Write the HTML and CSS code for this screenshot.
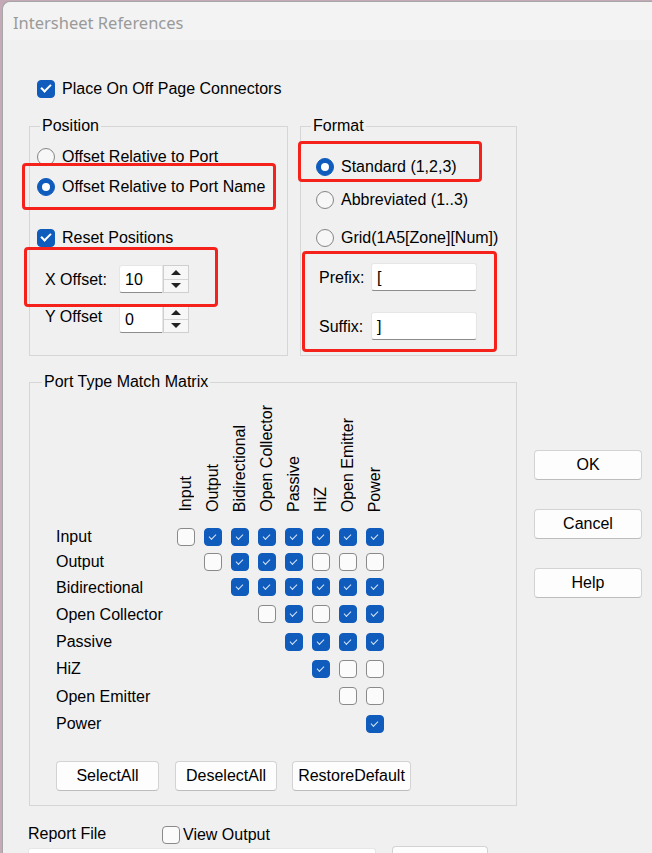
FILE: index.html
```html
<!DOCTYPE html>
<html lang="en">
<head>
    <meta charset="UTF-8">
    <meta name="viewport" content="width=device-width, initial-scale=1.0">
    <title>Intersheet References</title>
    <link rel="stylesheet" href="styles.css">
</head>
<body>
    <div class="window">
        <div class="titlebar">Intersheet References</div>
        <div class="content">
            <div class="main">
                <div class="opt top-check"><span class="cb on"></span>Place On Off Page Connectors</div>

                <div class="groups">
                    <fieldset class="group position">
                        <legend>Position</legend>
                        <div class="opt pos-1"><span class="radio"></span>Offset Relative to Port</div>
                        <div class="opt pos-2"><span class="radio on"></span>Offset Relative to Port Name</div>
                        <div class="opt pos-reset"><span class="cb on"></span>Reset Positions</div>
                        <div class="field pos-x">
                            <span class="field-label">X Offset:</span>
                            <span class="spin-input">10</span>
                            <span class="spin"><span class="up"></span><span class="down"></span></span>
                        </div>
                        <div class="field pos-y">
                            <span class="field-label">Y Offset</span>
                            <span class="spin-input">0</span>
                            <span class="spin"><span class="up"></span><span class="down"></span></span>
                        </div>
                    </fieldset>

                    <fieldset class="group format">
                        <legend>Format</legend>
                        <div class="opt fmt-1"><span class="radio on"></span>Standard (1,2,3)</div>
                        <div class="opt fmt-2"><span class="radio"></span>Abbreviated (1..3)</div>
                        <div class="opt fmt-3"><span class="radio"></span>Grid(1A5[Zone][Num])</div>
                        <div class="field fmt-prefix">
                            <span class="field-label">Prefix:</span>
                            <span class="text-input">[</span>
                        </div>
                        <div class="field fmt-suffix">
                            <span class="field-label">Suffix:</span>
                            <span class="text-input">]</span>
                        </div>
                    </fieldset>
                </div>

                <fieldset class="group matrix-group">
                    <legend>Port Type Match Matrix</legend>
                    <div class="matrix" id="matrix">
                        <!-- filled by script -->
                    </div>
                    <div class="matrix-buttons">
                        <button class="btn select-all">SelectAll</button>
                        <button class="btn deselect-all">DeselectAll</button>
                        <button class="btn restore">RestoreDefault</button>
                    </div>
                </fieldset>

                <div class="report-row">
                    <span class="report-label">Report File</span>
                    <div class="opt view-output"><span class="cb"></span>View Output</div>
                </div>
                <div class="report-file">
                    <span class="text-input report-input"></span>
                    <button class="btn browse"></button>
                </div>
            </div>

            <div class="side">
                <button class="btn">OK</button>
                <button class="btn">Cancel</button>
                <button class="btn">Help</button>
            </div>
        </div>
    </div>

    <!-- red annotation boxes -->
    <div class="mark mark-1"></div>
    <div class="mark mark-2"></div>
    <div class="mark mark-3"></div>
    <div class="mark mark-4"></div>

    <script>
        const ports = ["Input", "Output", "Bidirectional", "Open Collector", "Passive", "HiZ", "Open Emitter", "Power"];

        // each row starts at its own column (upper triangle)
        const matches = [
            [0, 1, 1, 1, 1, 1, 1, 1],
            [0, 1, 1, 1, 0, 0, 0],
            [1, 1, 1, 1, 1, 1],
            [0, 1, 0, 1, 1],
            [1, 1, 1, 1],
            [1, 0, 0],
            [0, 0],
            [1]
        ];

        function buildMatrix() {
            const matrix = document.getElementById("matrix");
            let html = '<div class="corner"></div>';

            ports.forEach(port => {
                html += `<div class="col-head"><span>${port}</span></div>`;
            });

            ports.forEach((port, i) => {
                html += `<div class="row-head">${port}</div>`;
                for (let j = 0; j < ports.length; j++) {
                    if (j < i) {
                        html += '<div class="cell"></div>';
                    } else {
                        const on = matches[i][j - i] ? " on" : "";
                        html += `<div class="cell"><span class="cb${on}"></span></div>`;
                    }
                }
            });

            matrix.innerHTML = html;
        }

        buildMatrix();
    </script>
</body>
</html>
```

FILE: styles.css
```css
/* Page */
body {
    margin: 0;
    position: relative;
    overflow: hidden;
    background-color: #c4aab6;
    font-family: 'Liberation Sans', Arial, sans-serif;
    font-size: 16px;
    line-height: 20px;
    color: #000;
}

.window {
    margin: 1px 0 0 2px;
    height: 851px;
    overflow: hidden;
    background-color: #f0f0f0;
    border-top: 1px solid #a6a6a6;
    border-left: 1px solid #a6a6a6;
    border-top-left-radius: 8px;
}

.titlebar {
    height: 38px;
    box-sizing: border-box;
    padding: 3px 0 0 10px;
    display: flex;
    align-items: center;
    background-color: #f3f3f3;
    border-top-left-radius: 8px;
    font-family: 'Noto Sans', sans-serif;
    font-size: 16.5px;
    color: #9a9a9a;
}

.content {
    display: flex;
    padding-left: 26px;
}

.main {
    width: 488px;
    flex-shrink: 0;
}

.side {
    width: 108px;
    margin-left: 17px;
    padding-top: 410px;
    display: flex;
    flex-direction: column;
    gap: 29px;
}

/* Controls */
.opt {
    display: flex;
    align-items: center;
    gap: 7px;
    height: 24px;
    box-sizing: border-box;
    padding-top: 1px;
    white-space: nowrap;
}

.cb {
    width: 18px;
    height: 18px;
    box-sizing: border-box;
    flex-shrink: 0;
    border: 1px solid #8a8a8a;
    border-radius: 4px;
    background-color: #fbfbfb;
    display: flex;
    align-items: center;
    justify-content: center;
}

.cb.on {
    border-color: #0f5cbd;
    background-color: #0f5cbd;
}

.cb.on::after {
    content: "";
    width: 8px;
    height: 4px;
    margin-top: -3px;
    border-left: 2px solid #fff;
    border-bottom: 2px solid #fff;
    transform: rotate(-45deg);
}

.radio {
    width: 18px;
    height: 18px;
    box-sizing: border-box;
    flex-shrink: 0;
    border: 1px solid #858585;
    border-radius: 50%;
    background-color: #f7f7f7;
    display: flex;
    align-items: center;
    justify-content: center;
}

.radio.on {
    border-color: #0f5cbd;
    background-color: #0f5cbd;
}

.radio.on::after {
    content: "";
    width: 8px;
    height: 8px;
    border-radius: 50%;
    background-color: #fff;
}

.field {
    display: flex;
    align-items: center;
    height: 28px;
    margin-left: 8px;
}

.field-label {
    flex-shrink: 0;
    padding-top: 1px;
}

.text-input,
.spin-input {
    height: 28px;
    box-sizing: border-box;
    padding: 4px 5px 0;
    background-color: #fff;
    border: 1px solid #e6e6e6;
    border-bottom: 1px solid #8c8c8c;
    border-radius: 3px;
}

.spin-input {
    width: 44px;
    border-radius: 3px 0 0 3px;
}

.spin {
    width: 26px;
    height: 28px;
    box-sizing: border-box;
    border: 1px solid #cfcfcf;
    background-color: #f7f7f7;
    display: flex;
    flex-direction: column;
}

.spin .up,
.spin .down {
    flex: 1;
    display: flex;
    align-items: center;
    justify-content: center;
}

.spin .up {
    border-bottom: 1px solid #d6d6d6;
}

.spin .up::after {
    content: "";
    border-left: 5px solid transparent;
    border-right: 5px solid transparent;
    border-bottom: 5px solid #222;
}

.spin .down::after {
    content: "";
    border-left: 5px solid transparent;
    border-right: 5px solid transparent;
    border-top: 5px solid #222;
}

.btn {
    height: 30px;
    box-sizing: border-box;
    padding: 0;
    font-family: inherit;
    font-size: 16px;
    color: #000;
    background-color: #fdfdfd;
    border: 1px solid #d3d3d3;
    border-bottom-color: #bdbdbd;
    border-radius: 4px;
}

/* Group boxes */
.group {
    margin: 0;
    min-width: 0;
    border: 1px solid #d6d6d6;
    padding: 0 7px;
}

.group legend {
    padding: 0 2px;
    margin-left: 3px;
    line-height: 20px;
}

.top-check {
    margin-top: 36px;
    margin-left: 8px;
}

.groups {
    display: flex;
    gap: 12px;
    margin-top: 16px;
}

.position {
    width: 259px;
    box-sizing: border-box;
    padding-bottom: 22px;
}

.format {
    flex: 1;
}

.pos-1 { margin-top: 8px; }
.pos-2 { margin-top: 6px; }
.pos-reset { margin-top: 27px; }
.pos-x { margin-top: 16px; }
.pos-y { margin-top: 12px; }

.pos-x .field-label,
.pos-y .field-label {
    width: 74px;
}

.pos-y .field-label {
    margin-top: -5px;
}

.format .opt {
    margin-left: 8px;
}

.fmt-1 { margin-top: 18px; }
.fmt-2 { margin-top: 9px; }
.fmt-3 { margin-top: 14px; }
.fmt-prefix { margin-top: 14px; }
.fmt-suffix { margin-top: 21px; }

.format .field {
    margin-left: 11px;
}

.format .field-label {
    width: 52px;
}

.format .text-input {
    width: 106px;
}

/* Match matrix */
.matrix-group {
    margin-top: 16px;
    padding: 0 12px 14px;
}

.matrix-group legend {
    margin-left: 0;
}

.matrix {
    margin: 16px 0 0 14px;
    display: grid;
    grid-template-columns: 116px repeat(8, 27px);
    grid-template-rows: 116px 25px 25px 26px 28px 27px 27px 28px 27px;
}

.col-head {
    display: flex;
    justify-content: center;
    align-items: flex-end;
    padding-bottom: 12px;
}

.col-head span {
    writing-mode: vertical-rl;
    transform: rotate(180deg);
    white-space: nowrap;
}

.row-head {
    display: flex;
    align-items: center;
    padding-top: 1px;
    white-space: nowrap;
}

.cell {
    display: flex;
    align-items: center;
    justify-content: center;
}

.matrix .cb.on::after {
    width: 6px;
    height: 3px;
    margin-top: -2px;
    border-left: 1.5px solid #d8e6f7;
    border-bottom: 1.5px solid #d8e6f7;
}

.matrix-buttons {
    display: flex;
    margin: 24px 0 0 14px;
}

.select-all { width: 103px; }
.deselect-all { width: 102px; margin-left: 16px; }
.restore { width: 119px; margin-left: 15px; }

/* Report file */
.report-row {
    display: flex;
    align-items: center;
    height: 20px;
    margin-top: 18px;
    margin-left: -1px;
}

.report-label {
    width: 134px;
}

.view-output {
    gap: 3px;
}

.report-file {
    display: flex;
    align-items: flex-start;
    margin-top: 2px;
    margin-left: -1px;
}

.report-input {
    width: 348px;
    margin-top: 2px;
}

.browse {
    width: 96px;
    margin-left: 16px;
}

/* Annotation boxes */
.mark {
    position: absolute;
    box-sizing: border-box;
    border: 3px solid #f5221c;
    border-radius: 4px;
}

.mark-1 { left: 22px; top: 163px; width: 254px; height: 47px; }
.mark-2 { left: 24px; top: 247px; width: 194px; height: 60px; }
.mark-3 { left: 298px; top: 141px; width: 184px; height: 41px; }
.mark-4 { left: 302px; top: 251px; width: 195px; height: 101px; }
```
